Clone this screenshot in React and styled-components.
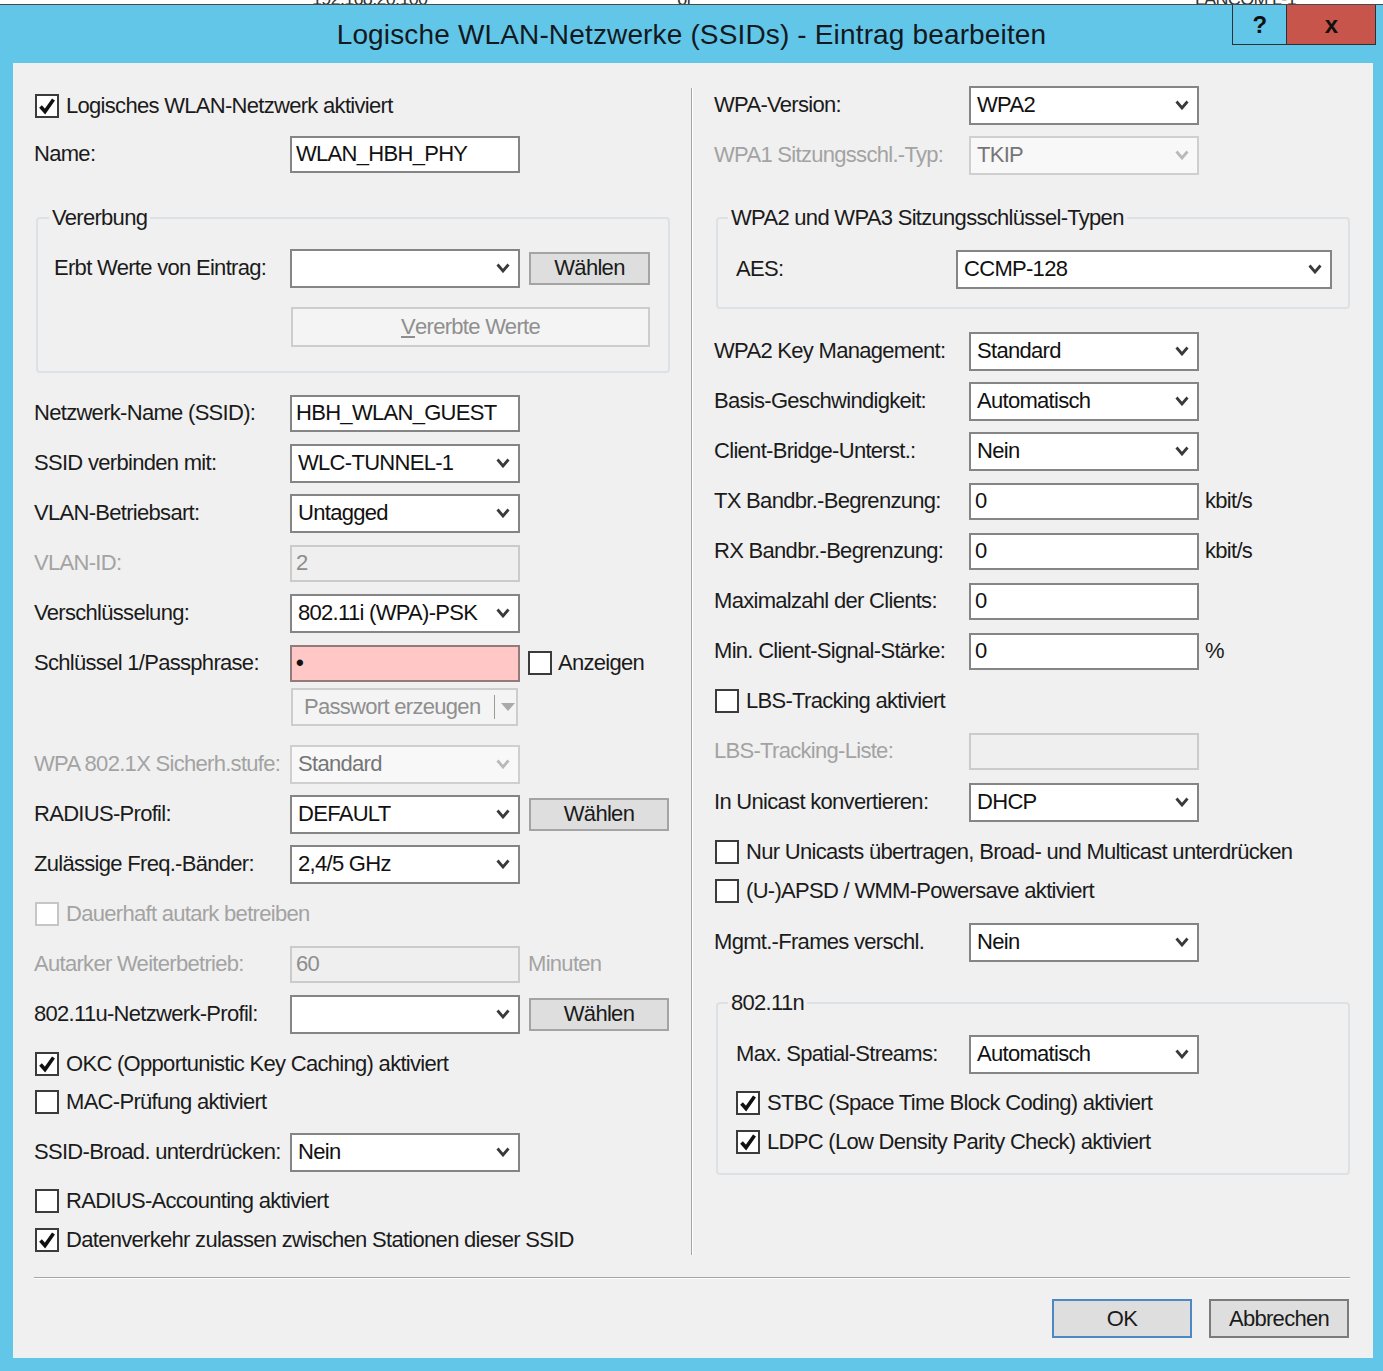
import React from 'react'
import styled, { createGlobalStyle } from 'styled-components'

const GlobalStyle = createGlobalStyle`
  html, body {
    margin: 0;
    padding: 0;
  }
  body {
    font-family: "Liberation Sans", Arial, sans-serif;
    font-size: 22px;
    letter-spacing: -0.7px;
    color: #1b1b1b;
    background: #62c6e8;
  }
`

const Frame = styled.div`
  width: 1383px;
  height: 1371px;
  background: #62c6e8;
  display: flex;
  flex-direction: column;
  overflow: hidden;
`

// strip of the window lying behind the dialog
const BackStrip = styled.div`
  height: 4px;
  flex: none;
  background: #fff;
  border-bottom: 1px solid #4a4a4a;
  overflow: hidden;
  display: flex;
  align-items: flex-end;
  font-size: 18px;
  color: #333;
`

const BackText = styled.span`
  flex: none;
  line-height: 10px;
  height: 10px;
  margin-left: ${(p) => p.$ml}px;
`

const TitleBar = styled.div`
  height: 58px;
  flex: none;
  display: grid;
  grid-template-columns: 1fr auto 1fr;
  align-items: center;
`

const Title = styled.div`
  grid-column: 2;
  font-size: 28px;
  letter-spacing: 0.15px;
  color: #13191e;
  padding-top: 2px;
`

const CaptionButtons = styled.div`
  grid-column: 3;
  justify-self: end;
  align-self: start;
  display: flex;
  margin-right: 7px;
  border: 1px solid #2b3135;
  border-top: none;
`

const CaptionButton = styled.div`
  width: ${(p) => p.$w}px;
  height: 39px;
  display: flex;
  align-items: center;
  justify-content: center;
  font-weight: bold;
  font-size: 24px;
  color: #111;
  background: ${(p) => (p.$close ? '#c8554c' : 'transparent')};
  border-left: ${(p) => (p.$close ? '1px solid #2b3135' : 'none')};
`

const Panel = styled.div`
  flex: 1;
  margin: 0 10px 13px 13px;
  background: #f0f0f0;
  padding: 23px 23px 0 21px;
  display: flex;
  flex-direction: column;
`

const Body = styled.div`
  display: grid;
  grid-template-columns: 636px 44px 636px;
  align-items: start;
`

const Column = styled.div`
  display: flex;
  flex-direction: column;
`

const Divider = styled.div`
  justify-self: center;
  width: 1px;
  height: 1167px;
  margin-top: 2px;
  background: #a5a5a5;
  border-right: 1px solid #fff;
`

const Row = styled.div`
  display: flex;
  align-items: center;
  height: ${(p) => p.$h || 38}px;
  margin-top: ${(p) => (p.$mt === undefined ? 12 : p.$mt)}px;
  padding-left: ${(p) => p.$pl || 0}px;
  gap: ${(p) => p.$gap || 0}px;
  white-space: nowrap;
`

const Label = styled.div`
  width: ${(p) => p.$w}px;
  flex: none;
  color: ${(p) => (p.$disabled ? '#a3a3a3' : '#1b1b1b')};
`

const Unit = styled.span`
  margin-left: ${(p) => p.$ml || 6}px;
  color: ${(p) => (p.$disabled ? '#a3a3a3' : '#1b1b1b')};
`

const EditBox = styled.div`
  width: ${(p) => p.$w || 230}px;
  height: 37px;
  box-sizing: border-box;
  flex: none;
  display: flex;
  align-items: center;
  padding-left: 4px;
  border: 2px solid ${(p) => (p.$disabled ? '#cbcbcb' : p.$error ? '#937b7b' : '#858585')};
  background: ${(p) => (p.$disabled ? '#efefef' : p.$error ? '#ffc7c6' : '#fff')};
  color: ${(p) => (p.$disabled ? '#8d8d8d' : '#111')};
`

const ComboBox = styled.div`
  width: ${(p) => p.$w || 230}px;
  height: 39px;
  box-sizing: border-box;
  flex: none;
  display: flex;
  align-items: center;
  justify-content: space-between;
  padding: 0 8px 0 6px;
  border: 2px solid ${(p) => (p.$disabled ? '#cfcfcf' : '#858585')};
  background: ${(p) => (p.$disabled ? '#f8f8f8' : '#fff')};
  color: ${(p) => (p.$disabled ? '#767676' : '#111')};
`

const Chevron = styled.svg`
  flex: none;
  width: 14px;
  height: 10px;
  stroke: ${(p) => (p.$disabled ? '#b9b9b9' : '#3a3a3a')};
`

const Button = styled.div`
  width: ${(p) => p.$w}px;
  height: ${(p) => p.$h || 33}px;
  box-sizing: border-box;
  flex: none;
  margin-left: ${(p) => p.$ml || 0}px;
  display: flex;
  align-items: center;
  justify-content: center;
  border: 2px solid ${(p) => (p.$default ? '#4d88c4' : p.$dark ? '#7b7b7b' : '#a4a4a4')};
  background: #dedede;
  color: #1b1b1b;
`

const DisabledButton = styled.div`
  width: ${(p) => p.$w}px;
  height: ${(p) => p.$h || 40}px;
  box-sizing: border-box;
  flex: none;
  margin-left: ${(p) => p.$ml || 0}px;
  display: flex;
  align-items: center;
  justify-content: center;
  border: 2px solid #cdcdcd;
  background: #f4f4f4;
  color: #8f8f8f;
`

const SplitButton = styled(DisabledButton)`
  justify-content: flex-start;
  padding-left: 11px;
`

const SplitSep = styled.span`
  width: 1px;
  height: 24px;
  background: #9a9a9a;
  margin: 0 6px 0 14px;
`

const Box = styled.span`
  width: 24px;
  height: 24px;
  box-sizing: border-box;
  flex: none;
  display: flex;
  align-items: center;
  justify-content: center;
  border: 2px solid ${(p) => (p.$disabled ? '#c6c6c6' : '#3b3b3b')};
  background: #fff;
`

const CheckText = styled.span`
  color: ${(p) => (p.$disabled ? '#a3a3a3' : '#1b1b1b')};
`

const Group = styled.fieldset`
  width: 634px;
  box-sizing: border-box;
  min-width: 0;
  margin: ${(p) => p.$mt}px 0 0 2px;
  padding: ${(p) => p.$pt}px 18px ${(p) => p.$pb}px ${(p) => p.$pl}px;
  border: 2px solid #dce1e5;
  border-radius: 4px;
`

const Legend = styled.legend`
  padding: 0 3px;
  margin-left: ${(p) => p.$ml}px;
  line-height: 26px;
`

const HRule = styled.div`
  margin-top: 18px;
  height: 1px;
  background: #a5a5a5;
  border-bottom: 1px solid #fff;
`

const Footer = styled.div`
  display: flex;
  justify-content: flex-end;
  gap: 17px;
  margin-top: 20px;
  padding-right: 1px;
`

const ChevronIcon = ({ disabled }) => (
  <Chevron $disabled={disabled} viewBox="0 0 14 10" fill="none">
    <path d="M1.5 1.5 L7 8 L12.5 1.5" strokeWidth="2.8" />
  </Chevron>
)

const Combo = ({ value, w, disabled }) => (
  <ComboBox $w={w} $disabled={disabled}>
    <span>{value}</span>
    <ChevronIcon disabled={disabled} />
  </ComboBox>
)

const Check = ({ checked, disabled, children, mt, pl = 1 }) => (
  <Row $mt={mt} $pl={pl} $gap={7}>
    <Box $disabled={disabled}>
      {checked && (
        <svg width="18" height="18" viewBox="0 0 18 18" fill="none">
          <path d="M2.5 9.5 L7 14.5 L15.5 2.5" stroke="#111" strokeWidth="3.6" />
        </svg>
      )}
    </Box>
    <CheckText $disabled={disabled}>{children}</CheckText>
  </Row>
)

export default function App() {
  return (
    <>
      <GlobalStyle />
      <Frame>
        <BackStrip>
          <BackText $ml={312}>192.168.20.100</BackText>
          <BackText $ml={250}>ol</BackText>
          <BackText $ml={505}>LANCOM L-1</BackText>
        </BackStrip>
        <TitleBar>
          <Title>Logische WLAN-Netzwerke (SSIDs) - Eintrag bearbeiten</Title>
          <CaptionButtons>
            <CaptionButton $w={53}>?</CaptionButton>
            <CaptionButton $w={88} $close>x</CaptionButton>
          </CaptionButtons>
        </TitleBar>
        <Panel>
          <Body>
            <Column>
              <Check checked mt={1}>Logisches WLAN-Netzwerk aktiviert</Check>
              <Row $mt={10}>
                <Label $w={256}>Name:</Label>
                <EditBox>WLAN_HBH_PHY</EditBox>
              </Row>
              <Group $mt={32} $pt={18} $pb={24} $pl={16}>
                <Legend $ml={-5}>Vererbung</Legend>
                <Row $mt={0}>
                  <Label $w={236}>Erbt Werte von Eintrag:</Label>
                  <Combo value="" />
                  <Button $w={121} $ml={9}>Wählen</Button>
                </Row>
                <Row $mt={20} $h={40}>
                  <DisabledButton $w={359} $ml={237}>
                    <u>V</u>ererbte Werte
                  </DisabledButton>
                </Row>
              </Group>
              <Row $mt={21}>
                <Label $w={256}>Netzwerk-Name (SSID):</Label>
                <EditBox>HBH_WLAN_GUEST</EditBox>
              </Row>
              <Row>
                <Label $w={256}>SSID verbinden mit:</Label>
                <Combo value="WLC-TUNNEL-1" />
              </Row>
              <Row>
                <Label $w={256}>VLAN-Betriebsart:</Label>
                <Combo value="Untagged" />
              </Row>
              <Row>
                <Label $w={256} $disabled>VLAN-ID:</Label>
                <EditBox $disabled>2</EditBox>
              </Row>
              <Row>
                <Label $w={256}>Verschlüsselung:</Label>
                <Combo value="802.11i (WPA)-PSK" />
              </Row>
              <Row>
                <Label $w={256}>Schlüssel 1/Passphrase:</Label>
                <EditBox $error>
                  <b>•</b>
                </EditBox>
                <Row $mt={0} $gap={6} $pl={8}>
                  <Box />
                  <CheckText>Anzeigen</CheckText>
                </Row>
              </Row>
              <Row $mt={6}>
                <SplitButton $w={227} $h={38} $ml={257}>
                  Passwort erzeugen
                  <SplitSep />
                  <svg width="14" height="8" viewBox="0 0 14 8">
                    <path d="M0 0 H14 L7 8 Z" fill="#a9a9a9" />
                  </svg>
                </SplitButton>
              </Row>
              <Row $mt={19}>
                <Label $w={256} $disabled>WPA 802.1X Sicherh.stufe:</Label>
                <Combo value="Standard" disabled />
              </Row>
              <Row>
                <Label $w={256}>RADIUS-Profil:</Label>
                <Combo value="DEFAULT" />
                <Button $w={140} $ml={9}>Wählen</Button>
              </Row>
              <Row>
                <Label $w={256}>Zulässige Freq.-Bänder:</Label>
                <Combo value="2,4/5 GHz" />
              </Row>
              <Check disabled>Dauerhaft autark betreiben</Check>
              <Row>
                <Label $w={256} $disabled>Autarker Weiterbetrieb:</Label>
                <EditBox $disabled>60</EditBox>
                <Unit $ml={8} $disabled>Minuten</Unit>
              </Row>
              <Row>
                <Label $w={256}>802.11u-Netzwerk-Profil:</Label>
                <Combo value="" />
                <Button $w={140} $ml={9}>Wählen</Button>
              </Row>
              <Check checked>OKC (Opportunistic Key Caching) aktiviert</Check>
              <Check mt={0}>MAC-Prüfung aktiviert</Check>
              <Row>
                <Label $w={256}>SSID-Broad. unterdrücken:</Label>
                <Combo value="Nein" />
              </Row>
              <Check mt={11}>RADIUS-Accounting aktiviert</Check>
              <Check checked mt={1}>Datenverkehr zulassen zwischen Stationen dieser SSID</Check>
            </Column>

            <Divider />

            <Column>
              <Row $mt={0}>
                <Label $w={255}>WPA-Version:</Label>
                <Combo value="WPA2" />
              </Row>
              <Row>
                <Label $w={255} $disabled>WPA1 Sitzungsschl.-Typ:</Label>
                <Combo value="TKIP" disabled />
              </Row>
              <Group $mt={31} $pt={19} $pb={19} $pl={18}>
                <Legend $ml={-8}>WPA2 und WPA3 Sitzungsschlüssel-Typen</Legend>
                <Row $mt={0}>
                  <Label $w={220}>AES:</Label>
                  <Combo value="CCMP-128" w={376} />
                </Row>
              </Group>
              <Row $mt={23}>
                <Label $w={255}>WPA2 Key Management:</Label>
                <Combo value="Standard" />
              </Row>
              <Row>
                <Label $w={255}>Basis-Geschwindigkeit:</Label>
                <Combo value="Automatisch" />
              </Row>
              <Row>
                <Label $w={255}>Client-Bridge-Unterst.:</Label>
                <Combo value="Nein" />
              </Row>
              <Row>
                <Label $w={255}>TX Bandbr.-Begrenzung:</Label>
                <EditBox>0</EditBox>
                <Unit>kbit/s</Unit>
              </Row>
              <Row>
                <Label $w={255}>RX Bandbr.-Begrenzung:</Label>
                <EditBox>0</EditBox>
                <Unit>kbit/s</Unit>
              </Row>
              <Row>
                <Label $w={255}>Maximalzahl der Clients:</Label>
                <EditBox>0</EditBox>
              </Row>
              <Row>
                <Label $w={255}>Min. Client-Signal-Stärke:</Label>
                <EditBox>0</EditBox>
                <Unit>%</Unit>
              </Row>
              <Check>LBS-Tracking aktiviert</Check>
              <Row>
                <Label $w={255} $disabled>LBS-Tracking-Liste:</Label>
                <EditBox $disabled />
              </Row>
              <Row $mt={13}>
                <Label $w={255}>In Unicast konvertieren:</Label>
                <Combo value="DHCP" />
              </Row>
              <Check>Nur Unicasts übertragen, Broad- und Multicast unterdrücken</Check>
              <Check mt={1}>(U-)APSD / WMM-Powersave aktiviert</Check>
              <Row $mt={13}>
                <Label $w={255}>Mgmt.-Frames verschl.</Label>
                <Combo value="Nein" />
              </Row>
              <Group $mt={29} $pt={19} $pb={12} $pl={18}>
                <Legend $ml={-8}>802.11n</Legend>
                <Row $mt={0}>
                  <Label $w={233}>Max. Spatial-Streams:</Label>
                  <Combo value="Automatisch" />
                </Row>
                <Check checked mt={11} pl={0}>STBC (Space Time Block Coding) aktiviert</Check>
                <Check checked mt={1} pl={0}>LDPC (Low Density Parity Check) aktiviert</Check>
              </Group>
            </Column>
          </Body>
          <HRule />
          <Footer>
            <Button $w={140} $h={39} $default>OK</Button>
            <Button $w={140} $h={39} $dark>Abbrechen</Button>
          </Footer>
        </Panel>
      </Frame>
    </>
  )
}
